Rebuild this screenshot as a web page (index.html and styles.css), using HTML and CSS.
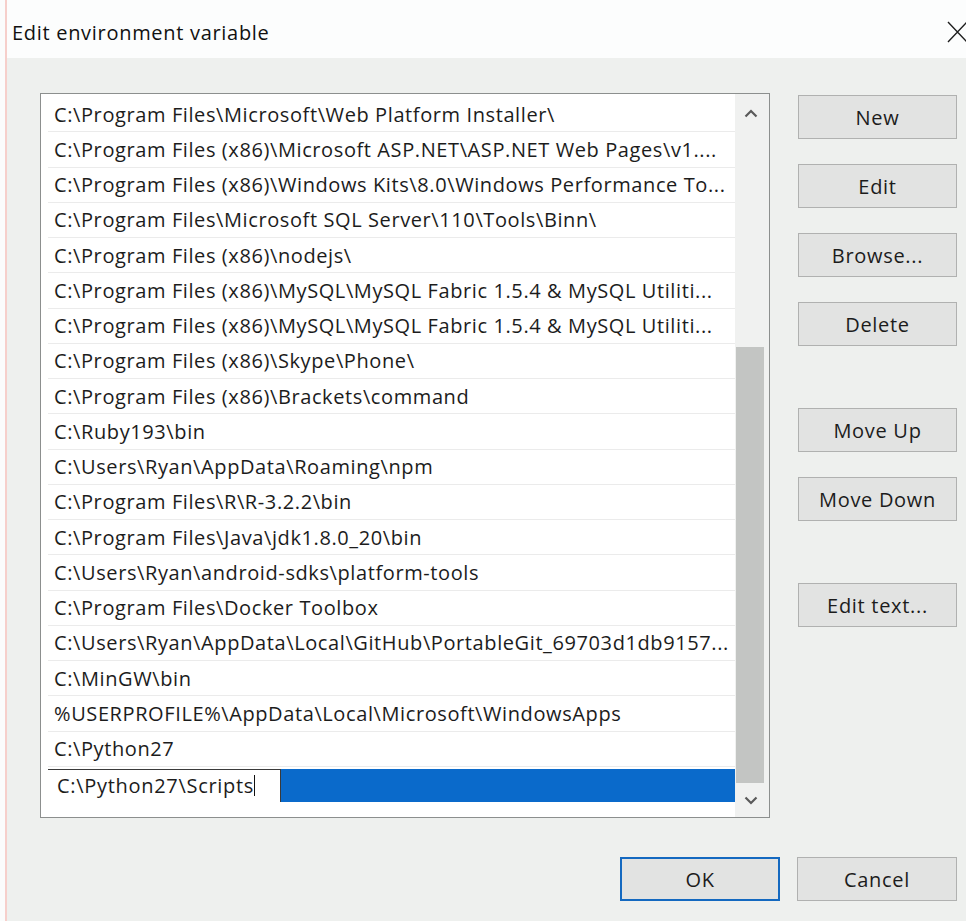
FILE: index.html
```html
<!DOCTYPE html>
<html lang="en">
<head>
<meta charset="utf-8">
<title>Edit environment variable</title>
<link rel="stylesheet" href="styles.css">
</head>
<body>
<div class="window">
  <header class="titlebar">
    <span class="title">Edit environment variable</span>
    <svg class="close" width="22" height="22" viewBox="0 0 22 22" aria-hidden="true">
      <path d="M2 1 L21 21 M21 1 L2 21" stroke="#1e1e1e" stroke-width="1.4" fill="none"/>
    </svg>
  </header>

  <main class="dialog">
    <div class="content">
      <div class="listbox">
        <ul class="items">
          <li class="item">C:\Program Files\Microsoft\Web Platform Installer\</li>
          <li class="item">C:\Program Files (x86)\Microsoft ASP.NET\ASP.NET Web Pages\v1....</li>
          <li class="item">C:\Program Files (x86)\Windows Kits\8.0\Windows Performance To...</li>
          <li class="item">C:\Program Files\Microsoft SQL Server\110\Tools\Binn\</li>
          <li class="item">C:\Program Files (x86)\nodejs\</li>
          <li class="item">C:\Program Files (x86)\MySQL\MySQL Fabric 1.5.4 &amp; MySQL Utiliti...</li>
          <li class="item">C:\Program Files (x86)\MySQL\MySQL Fabric 1.5.4 &amp; MySQL Utiliti...</li>
          <li class="item">C:\Program Files (x86)\Skype\Phone\</li>
          <li class="item">C:\Program Files (x86)\Brackets\command</li>
          <li class="item">C:\Ruby193\bin</li>
          <li class="item">C:\Users\Ryan\AppData\Roaming\npm</li>
          <li class="item">C:\Program Files\R\R-3.2.2\bin</li>
          <li class="item">C:\Program Files\Java\jdk1.8.0_20\bin</li>
          <li class="item">C:\Users\Ryan\android-sdks\platform-tools</li>
          <li class="item">C:\Program Files\Docker Toolbox</li>
          <li class="item">C:\Users\Ryan\AppData\Local\GitHub\PortableGit_69703d1db9157...</li>
          <li class="item">C:\MinGW\bin</li>
          <li class="item">%USERPROFILE%\AppData\Local\Microsoft\WindowsApps</li>
          <li class="item">C:\Python27</li>
          <li class="item editing">
            <span class="editor">C:\Python27\Scripts<span class="caret"></span></span>
            <span class="selection"></span>
          </li>
        </ul>
        <div class="scrollbar">
          <div class="arrow up">
            <svg width="14" height="9" viewBox="0 0 14 9" aria-hidden="true">
              <path d="M1.5 7.5 L7 2 L12.5 7.5" stroke="#5a5a5a" stroke-width="2.2" fill="none"/>
            </svg>
          </div>
          <div class="track"><div class="thumb"></div></div>
          <div class="arrow">
            <svg width="14" height="9" viewBox="0 0 14 9" aria-hidden="true">
              <path d="M1.5 1.5 L7 7 L12.5 1.5" stroke="#5a5a5a" stroke-width="2.2" fill="none"/>
            </svg>
          </div>
        </div>
      </div>

      <div class="side">
        <button class="btn">New</button>
        <button class="btn gap-s">Edit</button>
        <button class="btn gap-s">Browse...</button>
        <button class="btn gap-s">Delete</button>
        <button class="btn gap-l">Move Up</button>
        <button class="btn gap-s">Move Down</button>
        <button class="btn gap-l">Edit text...</button>
      </div>
    </div>

    <footer class="actions">
      <button class="btn default">OK</button>
      <button class="btn">Cancel</button>
    </footer>
  </main>
</div>
</body>
</html>
```

FILE: styles.css
```css
* { box-sizing: border-box; }

html, body {
  margin: 0;
  padding: 0;
  background: #fbfcfc;
}

body {
  font-family: "Open Sans", "Noto Sans", "Liberation Sans", sans-serif;
  font-size: 20px;
  letter-spacing: 0.7px;
  color: #1c1c1c;
}

.window {
  display: flex;
  flex-direction: column;
  height: 921px;
  margin-left: 5px;
  border-left: 2px solid #f6cfcb;
}

/* title bar */
.titlebar {
  height: 58px;
  flex: none;
  display: flex;
  align-items: center;
  justify-content: space-between;
  padding: 6px 0 0 5px;
  background: #fcfdfd;
}

.title {
  color: #111;
}

.close {
  display: block;
  margin-right: -2px;
}

/* dialog body */
.dialog {
  flex: 1;
  display: flex;
  flex-direction: column;
  background: #eef0ee;
  padding: 35px 9px 0 33px;
}

.content {
  display: flex;
  gap: 28px;
}

/* list of path entries */
.listbox {
  width: 730px;
  height: 725px;
  display: flex;
  border: 1px solid #8c8f8e;
  background: #ffffff;
}

.items {
  list-style: none;
  margin: 0;
  padding: 3px 0 0 7px;
  flex: 1;
  min-width: 0;
  overflow: hidden;
  letter-spacing: 0.6px;
}

.item {
  height: 35.25px;
  display: flex;
  align-items: center;
  padding-left: 6px;
  border-bottom: 1px solid #ebebeb;
  white-space: nowrap;
  overflow: hidden;
}

.item.editing {
  border-bottom: none;
  padding-left: 0;
  align-items: flex-start;
  padding-top: 2px;
}

.editor {
  margin-left: -1px;
  width: 234px;
  height: 34px;
  display: flex;
  align-items: center;
  padding-left: 9px;
  border: 1px solid #3a3a3a;
  background: #fff;
  letter-spacing: 0.7px;
}

.caret {
  display: inline-block;
  width: 1px;
  height: 21px;
  background: #111;
}

.selection {
  flex: 1;
  height: 33px;
  background: #0a6acb;
}

/* vertical scrollbar */
.scrollbar {
  width: 34px;
  flex: none;
  display: flex;
  flex-direction: column;
  background: #f0f1f0;
}

.arrow {
  height: 34px;
  flex: none;
  display: flex;
  align-items: center;
  justify-content: center;
  padding-right: 2px;
}

.arrow.up { padding-top: 4px; }

.track {
  flex: 1;
  display: flex;
  flex-direction: column;
  justify-content: flex-end;
  padding-left: 1px;
}

.thumb {
  width: 28px;
  height: 436px;
  background: #c3c5c3;
}

/* button column */
.side {
  width: 159px;
  display: flex;
  flex-direction: column;
  padding-top: 2px;
}

.btn {
  height: 44px;
  width: 159px;
  border: 1px solid #b0b1b0;
  background: #e2e3e2;
  font-family: inherit;
  font-size: 20px;
  letter-spacing: 0.7px;
  color: #1c1c1c;
  padding: 0;
}

.gap-s { margin-top: 25px; }
.gap-l { margin-top: 62px; }

/* OK / Cancel */
.actions {
  display: flex;
  justify-content: flex-end;
  gap: 17px;
  margin-top: 39px;
}

.actions .btn { width: 160px; }

.btn.default {
  border: 2px solid #1469c0;
}
```
